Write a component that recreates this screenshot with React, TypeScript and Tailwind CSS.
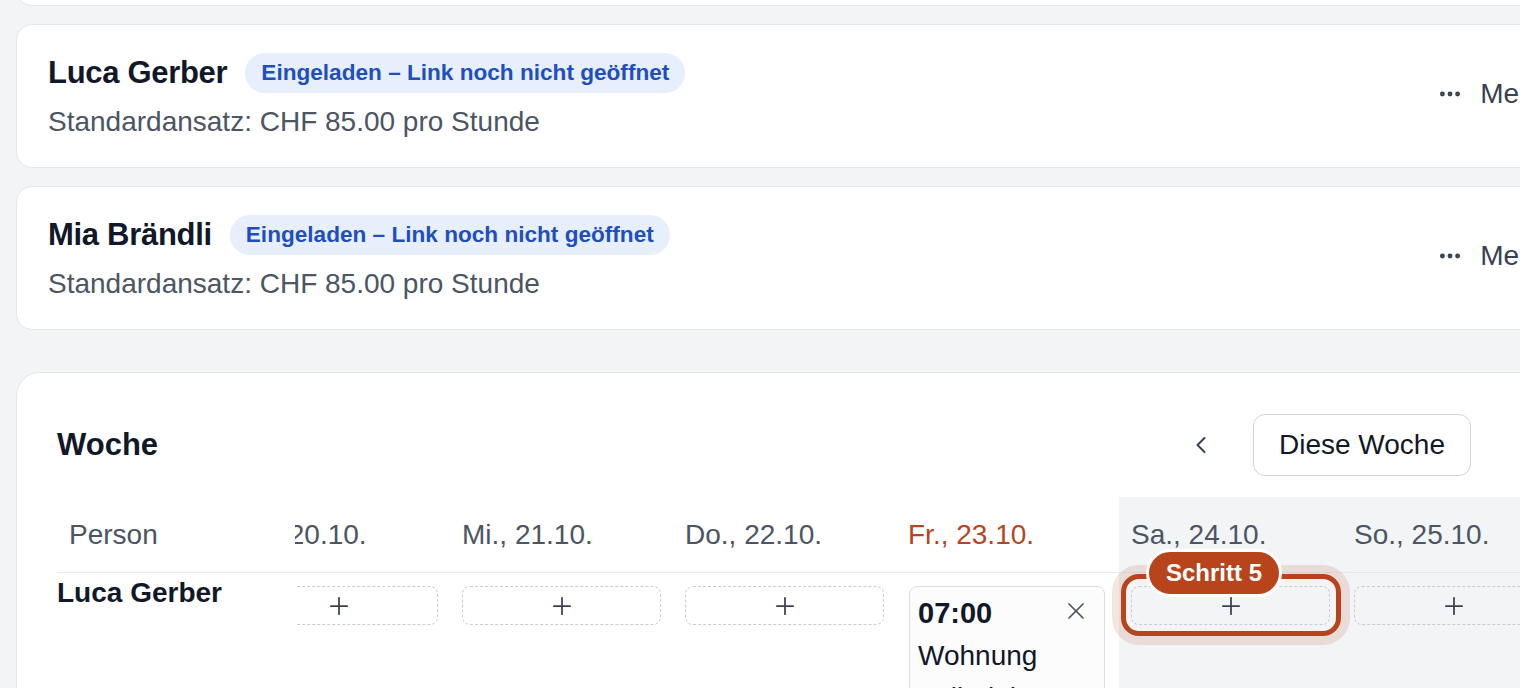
import { ChevronLeft, ChevronRight, Ellipsis, Plus, X } from "lucide-react";

type Day = { label: string; weekend?: boolean; today?: boolean };

const days: Day[] = [
  { label: "Di., 20.10." },
  { label: "Mi., 21.10." },
  { label: "Do., 22.10." },
  { label: "Fr., 23.10.", today: true },
  { label: "Sa., 24.10.", weekend: true },
  { label: "So., 25.10.", weekend: true },
];

function PersonCard({ name }: { name: string }) {
  return (
    <div className="w-[1574px] shrink-0 rounded-2xl border border-[#e5e7eb] bg-white pl-[31px] pr-[31px] pt-[28px] pb-[29px] flex items-center justify-between">
      <div className="flex flex-col gap-[13px]">
        <div className="flex items-center gap-[18px] h-[40px]">
          <h2 className="text-[31px] font-bold text-[#111827] tracking-[-0.3px]">{name}</h2>
          <span className="h-[40px] flex items-center px-[16px] rounded-full bg-[#e7eefc] text-[#1f4fbf] text-[22.6px] font-bold">
            Eingeladen – Link noch nicht geöffnet
          </span>
        </div>
        <p className="text-[28px] leading-[32px] text-[#4b5563]">
          Standardansatz: CHF 85.00 pro Stunde
        </p>
      </div>
      <button className="flex items-center gap-[17px] pr-[14px] text-[28px] text-[#374151] -mt-[4px]">
        <Ellipsis size={26} strokeWidth={2.5} />
        Mehr
      </button>
    </div>
  );
}

function AddSlot() {
  return (
    <div className="h-[39px] rounded-lg border border-dashed border-[#c9cdd3] flex items-center justify-center text-[#374151]">
      <Plus size={28} strokeWidth={1.5} />
    </div>
  );
}

export default function App() {
  return (
    <div className="w-[1520px] h-[688px] overflow-hidden bg-[#f3f4f6] font-['Liberation_Sans',Arial,sans-serif]">
      <div className="flex flex-col pl-[16px]">
        <div className="w-[1574px] h-[140px] -mt-[134px] rounded-2xl border border-[#e5e7eb] bg-white" />
        <div className="mt-[18px]">
          <PersonCard name="Luca Gerber" />
        </div>
        <div className="mt-[18px]">
          <PersonCard name="Mia Brändli" />
        </div>

        <section className="mt-[42px] w-[1574px] rounded-3xl border border-[#e5e7eb] bg-white pl-[40px] pr-[40px] pt-[41px] h-[400px]">
          <div className="flex items-center justify-between h-[62px] mb-[21px]">
            <h2 className="text-[31px] font-bold text-[#111827]">Woche</h2>
            <div className="flex items-center">
              <button className="w-[40px] h-[40px] flex items-center justify-center text-[#374151]">
                <ChevronLeft size={28} strokeWidth={1.75} />
              </button>
              <button className="ml-[32px] h-[62px] px-[25px] rounded-xl border border-[#d1d5db] text-[28px] text-[#111827]">
                Diese Woche
              </button>
              <button className="ml-[38px] w-[40px] h-[40px] flex items-center justify-center text-[#374151]">
                <ChevronRight size={28} strokeWidth={1.75} />
              </button>
            </div>
          </div>

          <div className="flex">
            <div className="w-[238px] shrink-0 bg-white relative z-10">
              <div className="h-[76px] border-b border-[#e5e7eb] flex items-center pl-[12px] text-[28px] text-[#4b5563]">
                Person
              </div>
              <div className="pt-[4px] text-[28px] leading-[32px] font-bold text-[#111827]">
                Luca Gerber
              </div>
            </div>

            <div className="flex-1 overflow-hidden">
              <div className="flex -ml-[68px]">
                {days.map((d) => (
                  <div
                    key={d.label}
                    className={
                      "w-[223px] shrink-0 h-[260px] " + (d.weekend ? "bg-[#f2f4f6]" : "bg-white")
                    }
                  >
                    <div
                      className={
                        "h-[76px] border-b border-[#e5e7eb] flex items-center px-[12px] text-[28px] " +
                        (d.today ? "text-[#b6461f]" : "text-[#4b5563]")
                      }
                    >
                      {d.label}
                    </div>
                    <div className="px-[12px] pt-[13px]">
                      {d.today ? (
                        <div className="rounded-lg border border-[#d9dce1] bg-[#fcfcfd] pl-[8px] pr-[14px] pt-[9px] h-[140px] mr-[2px] ml-[1px]">
                          <div className="flex items-start justify-between">
                            <span className="text-[29px] leading-[34px] font-bold text-[#111827]">07:00</span>
                            <X size={28} strokeWidth={1.5} className="mt-[1px] text-[#4b5563]" />
                          </div>
                          <p className="mt-[5px] text-[28px] leading-[42px] text-[#111827]">
                            Wohnung Vollreinigung
                          </p>
                        </div>
                      ) : d.label.startsWith("Sa") ? (
                        <div className="relative">
                          <AddSlot />
                          <div className="absolute -left-[10px] -right-[11px] -top-[12px] -bottom-[11px] rounded-[18px] border-[5px] border-[#b7441a] shadow-[0_0_0_9px_rgba(183,68,26,0.14)]" />
                          <span className="absolute left-[15px] -top-[37px] h-[48px] px-[17px] flex items-center rounded-full border-[3px] border-white bg-[#b7441a] text-white text-[24px] font-bold">
                            Schritt 5
                          </span>
                        </div>
                      ) : (
                        <AddSlot />
                      )}
                    </div>
                  </div>
                ))}
              </div>
            </div>
          </div>
        </section>
      </div>
    </div>
  );
}
